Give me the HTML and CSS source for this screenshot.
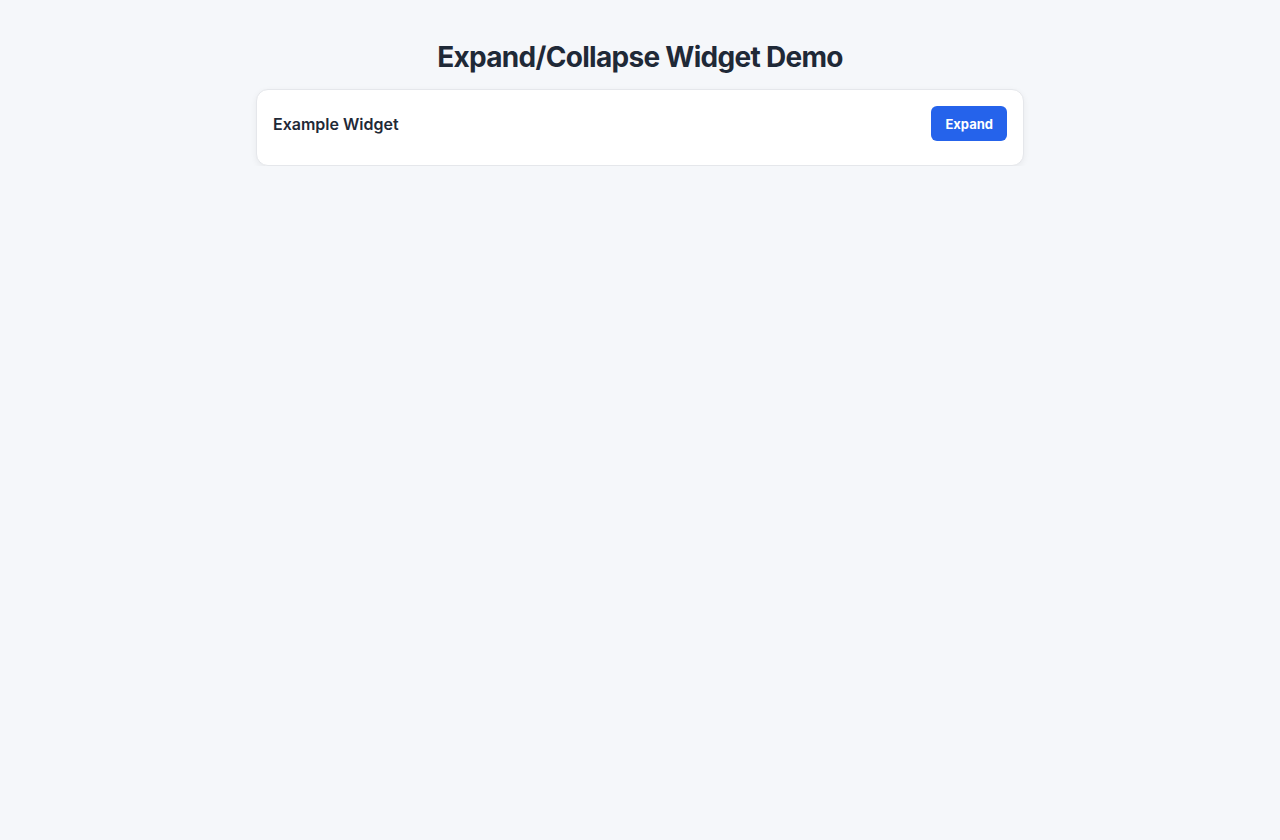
FILE: index.html
```html
<!DOCTYPE html>
<html lang="en">
<head>
  <meta charset="utf-8">
  <title>Expand/Collapse Widget Demo</title>
  <link rel="stylesheet" href="styles.css">
</head>
<body>
  <div class="container">
    <h1>Expand/Collapse Widget Demo</h1>
    <div class="widget" id="widget">
      <div class="widget-header">
        <div class="widget-title">Example Widget</div>
        <button class="btn" id="toggle">Expand</button>
      </div>
      <div class="widget-body hidden" id="body">
        <p>This is the widget content. It can be shown or hidden.</p>
      </div>
    </div>
  </div>
  <script>
    (function() {
      'use strict';
      var toggle = document.getElementById('toggle');
      var body = document.getElementById('body');
      toggle.addEventListener('click', function() {
        body.classList.toggle('hidden');
        toggle.textContent = body.classList.contains('hidden') ? 'Expand' : 'Collapse';
      });
    })();
  </script>
</body>
</html>
```

FILE: styles.css
```css
body {
  margin: 0;
  background: #f5f7fa;
  font-family: "Inter", "Liberation Sans", sans-serif;
  color: #1f2937;
}

.container {
  width: 768px;
  margin: 0 auto;
  padding-top: 40px;
}

h1 {
  margin: 0 0 15px;
  font-size: 28px;
  font-weight: 700;
  letter-spacing: -0.025em;
  text-align: center;
  line-height: 34px;
}

.widget {
  background: #ffffff;
  border: 1px solid #e5e7eb;
  border-radius: 12px;
  padding: 16px 16px 8px;
  box-shadow: 0 2px 6px rgba(0, 0, 0, 0.06);
}

.widget-header {
  display: flex;
  justify-content: space-between;
  align-items: center;
  margin-bottom: 16px;
}

.widget-title {
  font-size: 16px;
  font-weight: 600;
}

.btn {
  background: #2563eb;
  color: #ffffff;
  border: none;
  border-radius: 6px;
  padding: 0 14px;
  height: 35px;
  font-family: inherit;
  font-size: 13px;
  font-weight: 700;
  cursor: pointer;
}

.widget-body {
  font-size: 14px;
  color: #4b5563;
}

.widget-body.hidden {
  display: none;
}
```
